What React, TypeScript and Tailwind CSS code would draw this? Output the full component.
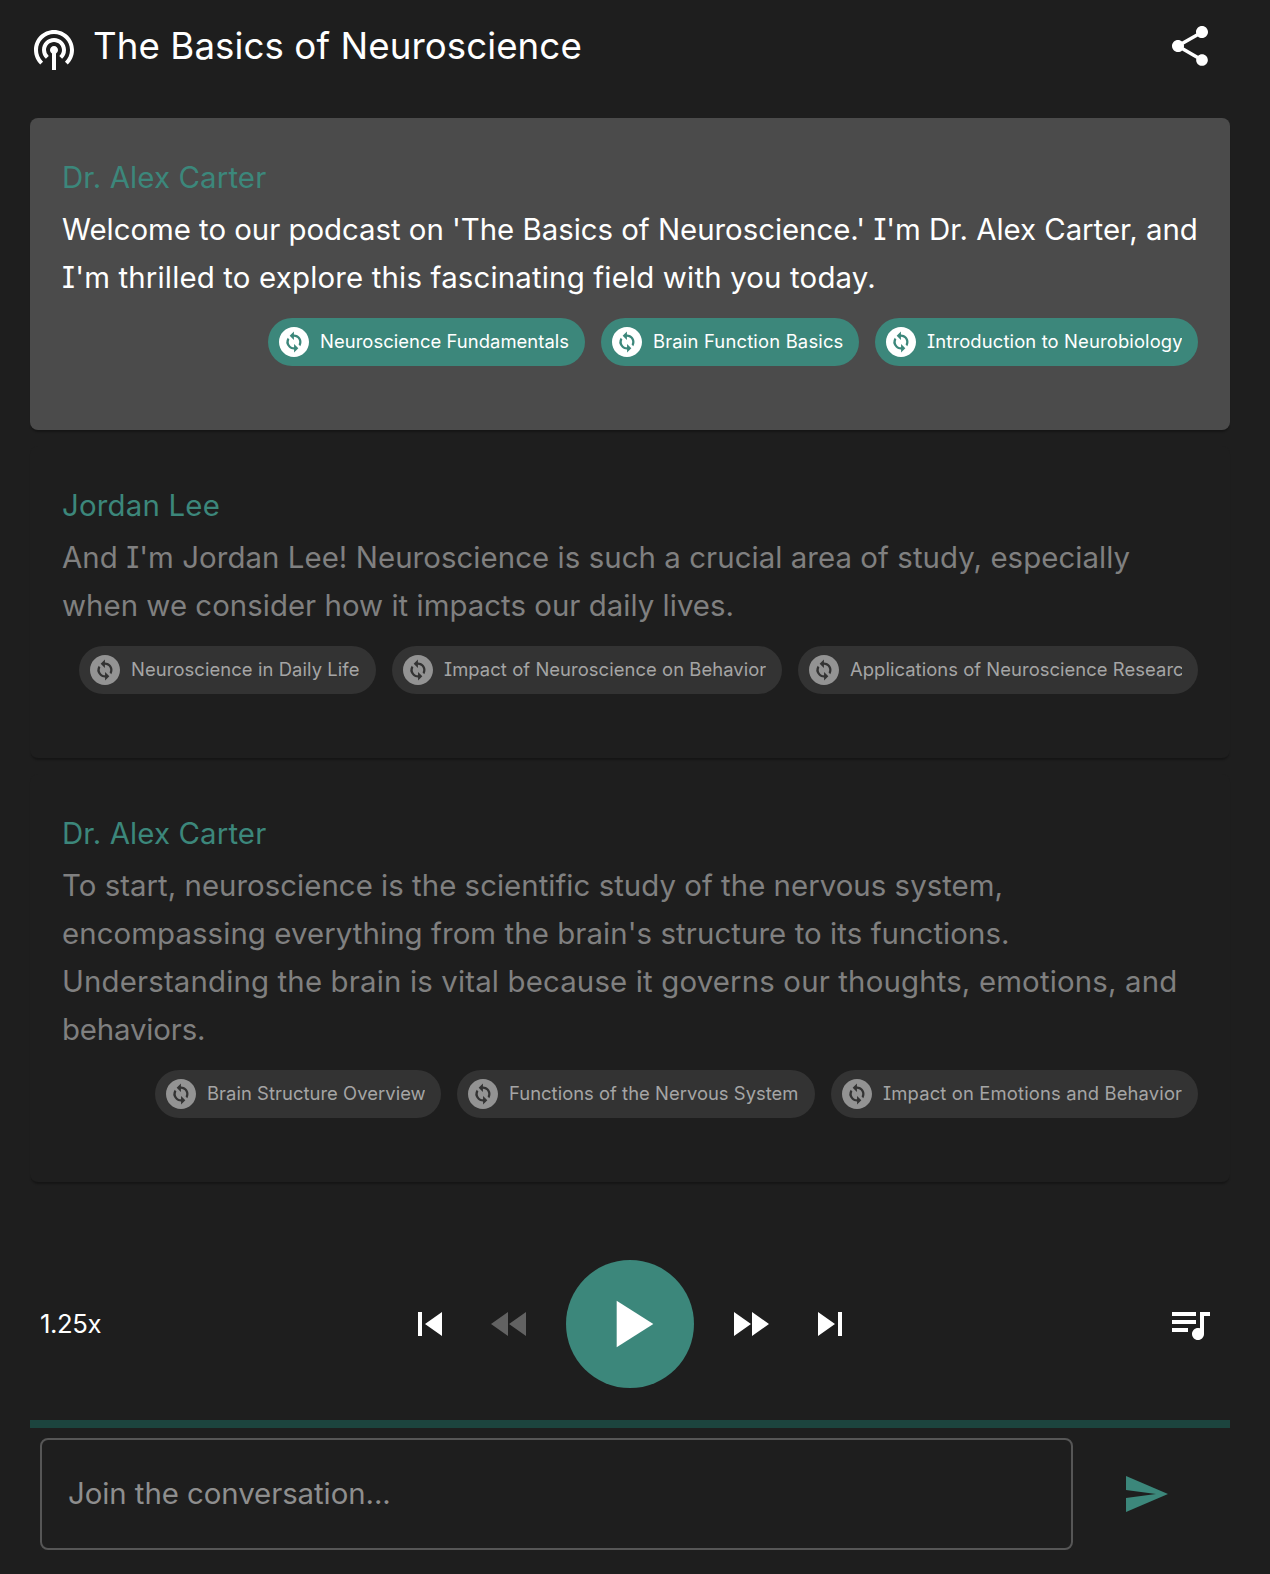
import {
  MdChangeCircle,
  MdFastForward,
  MdFastRewind,
  MdPlayArrow,
  MdPodcasts,
  MdQueueMusic,
  MdSend,
  MdShare,
  MdSkipNext,
  MdSkipPrevious,
} from "react-icons/md";

type Line = { text: string; fit: string };
type Topic = { label: string; width: string; fit: string };
type Turn = { speaker: Line; lines: Line[]; topics: Topic[]; active?: boolean };

const turns: Turn[] = [
  {
    active: true,
    speaker: { text: "Dr. Alex Carter", fit: "tracking-[0.13px]" },
    lines: [
      { text: "Welcome to our podcast on 'The Basics of Neuroscience.' I'm Dr. Alex Carter, and", fit: "tracking-[-0.025px]" },
      { text: "I'm thrilled to explore this fascinating field with you today.", fit: "tracking-[0.178px]" },
    ],
    topics: [
      { label: "Neuroscience Fundamentals", width: "w-[317px]", fit: "tracking-[0.06px]" },
      { label: "Brain Function Basics", width: "w-[258px]", fit: "tracking-[0.19px]" },
      { label: "Introduction to Neurobiology", width: "w-[323px]", fit: "tracking-[0.14px]" },
    ],
  },
  {
    speaker: { text: "Jordan Lee", fit: "tracking-[0.2px]" },
    lines: [
      { text: "And I'm Jordan Lee! Neuroscience is such a crucial area of study, especially", fit: "tracking-[0.066px]" },
      { text: "when we consider how it impacts our daily lives.", fit: "tracking-[0.03px]" },
    ],
    topics: [
      { label: "Neuroscience in Daily Life", width: "w-[297px]", fit: "tracking-[0.09px]" },
      { label: "Impact of Neuroscience on Behavior", width: "w-[390px]", fit: "tracking-[0.07px]" },
      { label: "Applications of Neuroscience Research", width: "w-[400px]", fit: "tracking-[0.06px]" },
    ],
  },
  {
    speaker: { text: "Dr. Alex Carter", fit: "tracking-[0.13px]" },
    lines: [
      { text: "To start, neuroscience is the scientific study of the nervous system,", fit: "tracking-[0.03px]" },
      { text: "encompassing everything from the brain's structure to its functions.", fit: "tracking-[0.08px]" },
      { text: "Understanding the brain is vital because it governs our thoughts, emotions, and", fit: "tracking-[0.16px]" },
      { text: "behaviors.", fit: "tracking-[-0.15px]" },
    ],
    topics: [
      { label: "Brain Structure Overview", width: "w-[286px]", fit: "tracking-[0.05px]" },
      { label: "Functions of the Nervous System", width: "w-[358px]", fit: "tracking-[0.03px]" },
      { label: "Impact on Emotions and Behavior", width: "w-[367px]", fit: "tracking-[0.16px]" },
    ],
  },
];

function TopicChip({ topic, active }: { topic: Topic; active?: boolean }) {
  return (
    <button
      className={`flex h-12 shrink-0 items-center rounded-full pl-2 pr-4 ${topic.width} ${
        active ? "bg-[#3c877b] text-white" : "bg-[#333333] text-[#a5a5a5]"
      }`}
    >
      <MdChangeCircle className={`size-9 shrink-0 ${active ? "text-white" : "text-[#939393]"}`} />
      <span
        className={`mb-0.5 ml-2 min-w-0 flex-1 overflow-hidden text-left text-[18.4px] leading-6 whitespace-nowrap ${topic.fit}`}
      >
        {topic.label}
      </span>
    </button>
  );
}

function TurnCard({ turn }: { turn: Turn }) {
  return (
    <article
      className={`rounded-lg px-8 pt-9 pb-16 shadow-[0_3px_2px_-1px_rgba(0,0,0,0.3)] ${
        turn.active ? "bg-[#4b4b4b] text-white" : "bg-[#1e1e1e] text-[#808080]"
      }`}
    >
      <h2 className={`mb-1 whitespace-nowrap text-[#3c877b] ${turn.speaker.fit}`}>{turn.speaker.text}</h2>
      {turn.lines.map((line) => (
        <p key={line.text} className={`whitespace-nowrap ${line.fit}`}>
          {line.text}
        </p>
      ))}
      <div className="mt-4 flex justify-end gap-4">
        {turn.topics.map((topic) => (
          <TopicChip key={topic.label} topic={topic} active={turn.active} />
        ))}
      </div>
    </article>
  );
}

export default function App() {
  return (
    <main className="flex h-[1574px] w-[1270px] flex-col bg-[#1e1e1e] pr-10 pl-[30px] font-['Inter',sans-serif] text-[29.4px] leading-[48px] text-white [font-feature-settings:'cv08'_1]">
      <header className="flex h-[118px] items-start">
        <MdPodcasts className="mt-[26px] size-12" />
        <h1 className="mt-[22px] ml-[15px] flex-1 text-[36.7px] tracking-[0.07px]">The Basics of Neuroscience</h1>
        <button className="mt-[22px] mr-4">
          <MdShare className="size-12" />
        </button>
      </header>

      <section className="flex flex-col gap-4">
        {turns.map((turn, i) => (
          <TurnCard key={i} turn={turn} />
        ))}
      </section>

      <section className="mt-[78px] grid h-32 grid-cols-[1fr_auto_1fr] items-center">
        <button className="ml-[10px] justify-self-start text-[25.7px] tracking-[-0.4px]">1.25x</button>
        <div className="flex items-center gap-8">
          <MdSkipPrevious className="size-12" />
          <MdFastRewind className="size-12 text-[#626262]" />
          <button className="flex size-32 items-center justify-center rounded-full bg-[#3c877b]">
            <MdPlayArrow className="size-20" />
          </button>
          <MdFastForward className="size-12" />
          <MdSkipNext className="size-12" />
        </div>
        <MdQueueMusic className="mr-4 size-12 justify-self-end" />
      </section>

      <div className="mt-8 h-2 bg-[#1c443e]" />

      <form className="mt-[10px] flex items-center pl-[10px]">
        <input
          className="h-28 w-[1033px] shrink-0 rounded-lg border-2 border-[#565656] bg-transparent px-[26px] pb-0.5 tracking-[-0.06px] placeholder:text-[#8e8e8e] placeholder:opacity-100"
          placeholder="Join the conversation..."
        />
        <button type="button" className="ml-[49px] text-[#3c877b]">
          <MdSend className="size-12" />
        </button>
      </form>
    </main>
  );
}
